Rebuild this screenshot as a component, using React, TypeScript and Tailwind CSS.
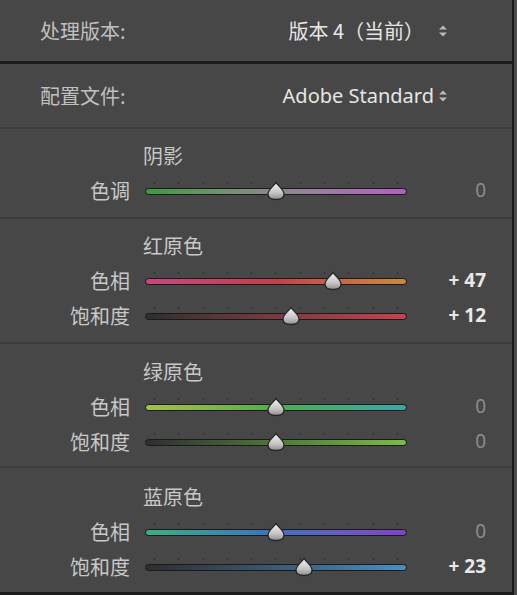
import { useId } from "react";

const cjk = "font-['Noto_Sans_CJK_SC','Noto_Sans',sans-serif]";

type SliderRow = {
  label: string;
  value: number;
  track: string;
};

type Section = {
  title: string;
  box: string;
  rows: SliderRow[];
};

const sections: Section[] = [
  {
    title: "阴影",
    box: "h-[90px] pt-[9px] border-b-2 border-[#3c3c3c]",
    rows: [
      {
        label: "色调",
        value: 0,
        track: "bg-linear-to-r from-[#3a9a3e] via-[#8a8a8a] to-[#b45cc4]",
      },
    ],
  },
  {
    title: "红原色",
    box: "h-[125px] pt-[9px] border-b-2 border-[#3c3c3c]",
    rows: [
      {
        label: "色相",
        value: 47,
        track: "bg-linear-to-r from-[#c4487e] via-[#c0404a] to-[#c88a3e]",
      },
      {
        label: "饱和度",
        value: 12,
        track: "bg-linear-to-r from-[#2e2e2e] via-[#7a3a3e] to-[#c8424c]",
      },
    ],
  },
  {
    title: "绿原色",
    box: "h-[124px] pt-[10px] border-b-2 border-[#3c3c3c]",
    rows: [
      {
        label: "色相",
        value: 0,
        track: "bg-linear-to-r from-[#a8c040] via-[#4cae4c] to-[#38a8a8]",
      },
      {
        label: "饱和度",
        value: 0,
        track: "bg-linear-to-r from-[#2e2e2e] via-[#4e7a36] to-[#7cbc44]",
      },
    ],
  },
  {
    title: "蓝原色",
    box: "h-[124px] pt-[11px]",
    rows: [
      {
        label: "色相",
        value: 0,
        track: "bg-linear-to-r from-[#3cae82] via-[#3c70c0] to-[#8040c8]",
      },
      {
        label: "饱和度",
        value: 23,
        track: "bg-linear-to-r from-[#2e2e2e] via-[#3a5a78] to-[#4890c8]",
      },
    ],
  },
];

function Stepper() {
  return (
    <svg width="10" height="14" viewBox="0 0 10 14" className="shrink-0">
      <path d="M5 1.5 L9 5.5 L1 5.5 Z" fill="#b8b8b8" />
      <path d="M1 8.5 L9 8.5 L5 12.5 Z" fill="#b8b8b8" />
    </svg>
  );
}

function Thumb({ x }: { x: number }) {
  const id = useId();
  return (
    <svg
      width="20"
      height="20"
      viewBox="0 0 20 20"
      className="absolute top-[2px]"
      style={{ left: x - 10 }}
    >
      <defs>
        <linearGradient id={id} x1="0" y1="0" x2="0" y2="1">
          <stop offset="0" stopColor="#f2f2f2" />
          <stop offset="0.6" stopColor="#c6c6c6" />
          <stop offset="1" stopColor="#8e8e8e" />
        </linearGradient>
      </defs>
      <path
        d="M10 1.5 C11.5 4.5 18 8.5 18 13 C18 17 14 18.5 10 18.5 C6 18.5 2 17 2 13 C2 8.5 8.5 4.5 10 1.5 Z"
        fill={`url(#${id})`}
        stroke="#262626"
        strokeWidth="1.3"
      />
    </svg>
  );
}

function Slider({ value, track }: { value: number; track: string }) {
  const center = 131 + value * 1.21;
  return (
    <div className="relative w-[262px] h-[24px] shrink-0">
      <div className="absolute left-0 right-0 top-[3px] h-[2px] flex justify-between px-[9px]">
        {Array.from({ length: 11 }).map((_, i) => (
          <span key={i} className="w-[1px] h-[2px] bg-[#2c2c2c]" />
        ))}
      </div>
      <div
        className={`absolute left-0 right-0 top-[9px] h-[7px] rounded-full border border-[#1a1a1a] ${track}`}
      />
      <Thumb x={center} />
    </div>
  );
}

function ValueText({ value }: { value: number }) {
  if (value === 0) {
    return <span className="text-[#8c8c8c]">0</span>;
  }
  return (
    <span className="text-[#e8e8e8] font-bold">
      {value > 0 ? `+ ${value}` : `- ${Math.abs(value)}`}
    </span>
  );
}

export default function App() {
  return (
    <div className={`w-[517px] h-[595px] bg-[#4c4c4c] flex ${cjk}`}>
      <div className="w-[514px] h-[595px] bg-[#474747] border-r-2 border-b-[3px] border-[#1c1c1c] flex flex-col">
        <div className="h-[61px] flex items-center justify-between pl-[40px] pr-[64px] text-[20px]">
          <span className="text-[#c0c0c0]">处理版本:</span>
          <div className="flex items-center gap-[14px] text-[#e6e6e6]">
            <span>版本 4（当前）</span>
            <Stepper />
          </div>
        </div>
        <div className="h-[3px] bg-[#1c1c1c]" />
        <div className="h-[65px] flex items-center justify-between pl-[40px] pr-[64px] border-b-2 border-[#3c3c3c]">
          <span className="text-[20px] text-[#c0c0c0]">配置文件:</span>
          <div className="flex items-center gap-[4px] text-[#e6e6e6]">
            <span className="text-[20px] font-['Noto_Sans',sans-serif]">Adobe Standard</span>
            <Stepper />
          </div>
        </div>
        {sections.map((s) => (
          <div key={s.title} className={`flex flex-col ${s.box}`}>
            <div className="h-[35px] flex items-center pl-[143px] text-[20px] text-[#c8c8c8]">
              {s.title}
            </div>
            {s.rows.map((r) => (
              <div key={r.label} className="h-[35px] flex items-center">
                <span className="w-[130px] text-right text-[20px] text-[#c8c8c8]">
                  {r.label}
                </span>
                <div className="ml-[15px]">
                  <Slider value={r.value} track={r.track} />
                </div>
                <span className="w-[79px] text-right text-[19px] font-['Noto_Sans',sans-serif]">
                  <ValueText value={r.value} />
                </span>
              </div>
            ))}
          </div>
        ))}
      </div>
    </div>
  );
}
